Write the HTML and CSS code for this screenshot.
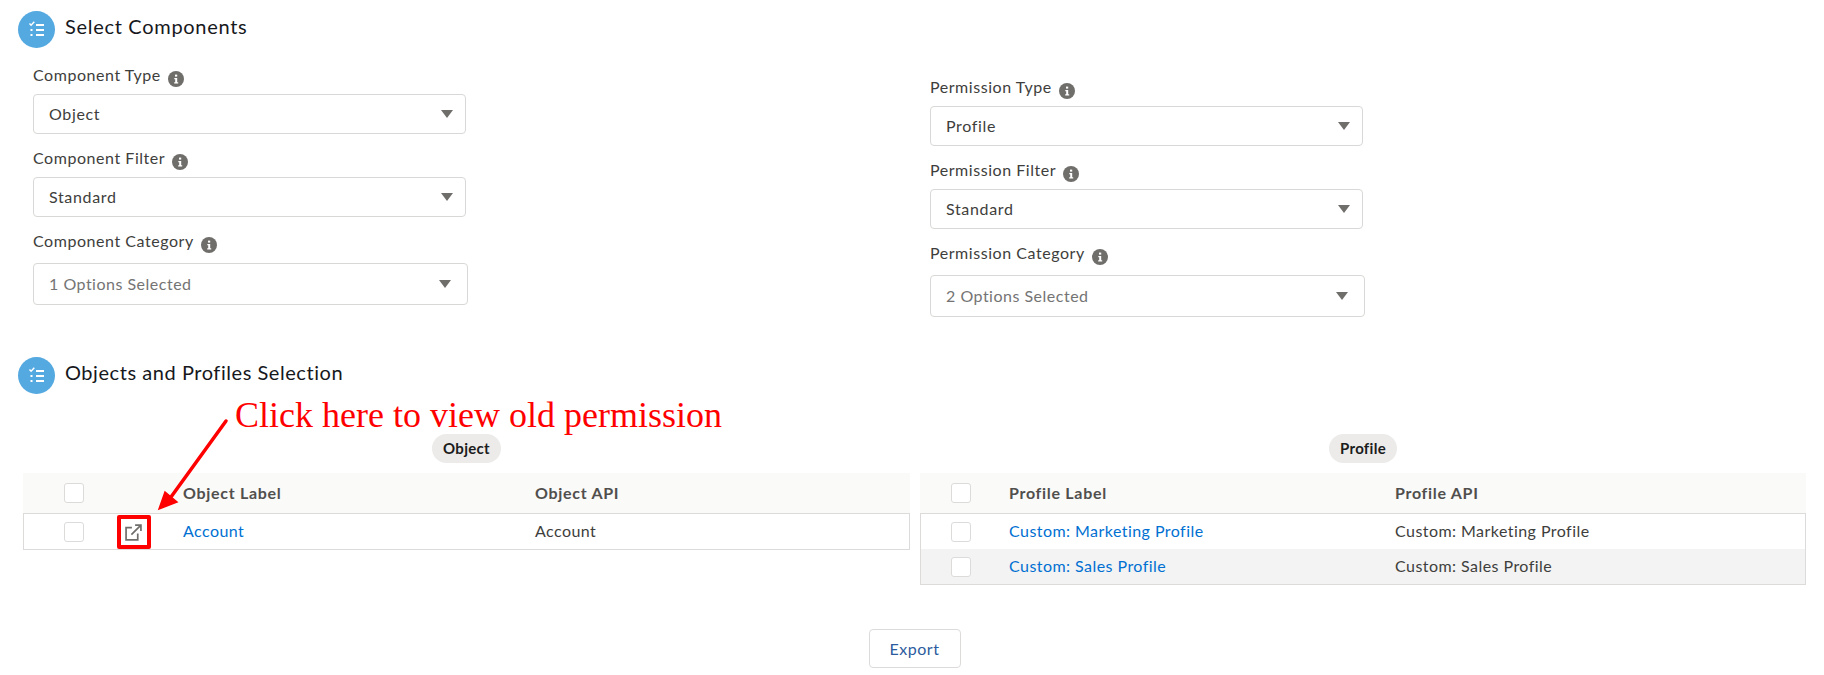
FILE: index.html
```html
<!DOCTYPE html>
<html lang="en">
<head>
<meta charset="utf-8">
<title>Select Components</title>
<link rel="stylesheet" href="styles.css">
</head>
<body>
<svg class="defs" width="0" height="0" aria-hidden="true">
  <symbol id="ic-list" viewBox="0 0 37 37">
    <path d="M11.500 12.500l1.600 1.800 3.200-3.600" fill="none" stroke="#fff" stroke-width="1.400"/>
    <rect x="18" y="13" width="8" height="2" fill="#fff"/>
    <rect x="18" y="18" width="8" height="2" fill="#fff"/>
    <rect x="18" y="23" width="8" height="2" fill="#fff"/>
    <rect x="12.500" y="18" width="2" height="2" fill="#fff"/>
    <rect x="12.500" y="23" width="2" height="2" fill="#fff"/>
  </symbol>
  <symbol id="ic-info" viewBox="0 0 16 16">
    <circle cx="8" cy="8" r="8" fill="#706e6b"/>
    <rect x="7" y="3.600" width="2.200" height="2" fill="#fff"/>
    <path d="M6.300 7h2.900v4.200h1v1.200H6.200v-1.200h1V8.200h-.9z" fill="#fff"/>
  </symbol>
</svg>

<header class="section-head">
  <span class="badge"><svg class="badge-ic"><use href="#ic-list"/></svg></span>
  <h2 class="title">Select Components</h2>
</header>

<section class="form">
  <div class="col">
    <div class="field">
      <div class="label">Component Type <svg class="info"><use href="#ic-info"/></svg></div>
      <div class="select"><span>Object</span><i class="caret"></i></div>
    </div>
    <div class="field">
      <div class="label">Component Filter <svg class="info"><use href="#ic-info"/></svg></div>
      <div class="select"><span>Standard</span><i class="caret"></i></div>
    </div>
    <div class="field">
      <div class="label label-multi">Component Category <svg class="info"><use href="#ic-info"/></svg></div>
      <div class="select multi"><span>1 Options Selected</span><i class="caret"></i></div>
    </div>
  </div>
  <div class="col col-right">
    <div class="field">
      <div class="label">Permission Type <svg class="info"><use href="#ic-info"/></svg></div>
      <div class="select"><span>Profile</span><i class="caret"></i></div>
    </div>
    <div class="field">
      <div class="label">Permission Filter <svg class="info"><use href="#ic-info"/></svg></div>
      <div class="select"><span>Standard</span><i class="caret"></i></div>
    </div>
    <div class="field">
      <div class="label label-multi">Permission Category <svg class="info"><use href="#ic-info"/></svg></div>
      <div class="select multi"><span>2 Options Selected</span><i class="caret"></i></div>
    </div>
  </div>
</section>

<div class="second">
  <header class="section-head">
    <span class="badge"><svg class="badge-ic"><use href="#ic-list"/></svg></span>
    <h2 class="title">Objects and Profiles Selection</h2>
  </header>

  <div class="callout">Click here to view old permission</div>
  <svg class="arrow" viewBox="0 0 75 95" aria-hidden="true">
    <path d="M71 4L16 80" fill="none" stroke="#f00" stroke-width="3.500" stroke-linecap="round"/>
    <path d="M4 92L10 75 22 85z" fill="#f00" stroke="#f00" stroke-width="1.500"/>
  </svg>

  <div class="tables">
    <div class="panel">
      <div class="pill-wrap"><span class="pill">Object</span></div>
      <div class="grid-row head obj">
        <span class="check"></span><span></span><span class="cell">Object Label</span><span class="cell">Object API</span>
      </div>
      <div class="grid-row body obj row-obj">
        <span class="check"></span>
        <span class="open-cell">
          <svg class="open-ic" viewBox="0 0 16 16"><path d="M6.500 3.500H1v11.500h11V9M6 10L15 1M9.500 1H15v5.500" fill="none" stroke="#706e6b" stroke-width="1.600"/></svg>
          <i class="red-box"></i>
        </span>
        <a class="cell link">Account</a><span class="cell">Account</span>
      </div>
    </div>
    <div class="panel">
      <div class="pill-wrap"><span class="pill">Profile</span></div>
      <div class="grid-row head pro">
        <span class="check"></span><span class="cell">Profile Label</span><span class="cell">Profile API</span>
      </div>
      <div class="pro-body">
        <div class="grid-row body pro">
          <span class="check"></span><a class="cell link">Custom: Marketing Profile</a><span class="cell">Custom: Marketing Profile</span>
        </div>
        <div class="grid-row body pro alt">
          <span class="check"></span><a class="cell link">Custom: Sales Profile</a><span class="cell">Custom: Sales Profile</span>
        </div>
      </div>
    </div>
  </div>

  <div class="actions"><button class="btn" type="button">Export</button></div>
</div>
</body>
</html>
```
FILE: styles.css
```css
* { box-sizing: border-box; }
html, body { margin: 0; padding: 0; background: #fff; }
body {
  width: 1824px;
  height: 675px;
  overflow: hidden;
  font-family: Lato, "Open Sans", sans-serif;
  font-size: 16px;
  color: #3e3e3c;
}
.defs { position: absolute; }

.section-head {
  display: flex;
  align-items: flex-start;
  gap: 10px;
  height: 37px;
  padding-left: 18px;
}
body > .section-head { margin-top: 11px; }
.badge {
  display: block;
  width: 37px;
  height: 37px;
  border-radius: 50%;
  background: #54a9e0;
}
.badge-ic { display: block; width: 37px; height: 37px; }
.title {
  margin: 0;
  font-size: 20px;
  font-weight: 400;
  line-height: 31px;
  color: #16181c;
  letter-spacing: 0.7px;
}
.second .title { letter-spacing: 0.55px; }

.form {
  display: flex;
  padding: 16px 0 0 33px;
  height: 309px;
}
.col { width: 435px; }
.col-right { margin-left: 462px; padding-top: 12px; }
.field { margin-bottom: 13px; }
.label {
  display: flex;
  align-items: flex-start;
  gap: 7px;
  height: 22px;
  margin-bottom: 8px;
  line-height: 22px;
  white-space: nowrap;
  color: #3e3e3c;
  letter-spacing: 0.55px;
}
.label-multi { margin-bottom: 11px; }
.info { width: 16px; height: 16px; margin-top: 7px; flex: none; }
.select {
  display: flex;
  align-items: center;
  justify-content: space-between;
  width: 433px;
  height: 40px;
  padding: 0 12px 0 15px;
  border: 1px solid #d8d8d6;
  border-radius: 4px;
  background: #fff;
  letter-spacing: 0.65px;
  line-height: 36px;
}
.select.multi { width: 435px; height: 42px; color: #747474; padding-right: 16px; letter-spacing: 0.5px; }
.caret {
  width: 0;
  height: 0;
  border-left: 6.500px solid transparent;
  border-right: 6.500px solid transparent;
  border-top: 8px solid #706e6b;
}

.second { position: relative; }
.callout {
  position: absolute;
  left: 235px;
  top: 36px;
  font-family: "Liberation Serif", serif;
  font-size: 36px;
  line-height: 44px;
  color: #f00;
  white-space: nowrap;
}
.arrow {
  position: absolute;
  left: 155px;
  top: 60px;
  width: 75px;
  height: 95px;
  z-index: 2;
}

.tables {
  display: flex;
  align-items: flex-start;
  gap: 10px;
  padding-left: 23px;
  margin-top: 40px;
}
.panel { width: 887px; }
.panel + .panel { width: 886px; }
.pill-wrap { display: flex; justify-content: center; margin-bottom: 10px; }
.pill {
  display: block;
  height: 29px;
  padding: 0 11px;
  border-radius: 15px;
  background: #ecebea;
  color: #1c1c1c;
  font-size: 15px;
  font-weight: 700;
  line-height: 29px;
  letter-spacing: 0.3px;
}

.grid-row { display: grid; align-items: center; letter-spacing: 0.45px; }
.obj { grid-template-columns: 20px 99px 352px 1fr; padding-left: 41px; }
.pro { grid-template-columns: 58px 386px 1fr; padding-left: 31px; }
.head {
  height: 40px;
  background: #fafaf9;
  color: #514f4d;
  font-weight: 700;
  letter-spacing: 0.7px;
}
.body { height: 35px; color: #3e3e3c; }
.cell { padding-bottom: 2px; }
.row-obj {
  height: 37px;
  padding-left: 40px;
  border: 1px solid #dddbda;
}
.pro-body {
  border: 1px solid #dddbda;
}
.pro-body .pro { padding-left: 30px; }
.alt { background: #f3f3f3; }
.check {
  display: block;
  width: 20px;
  height: 20px;
  border: 1px solid #dddbda;
  border-radius: 3px;
  background: #fff;
}
.link { color: #0070d2; }
.open-cell { position: relative; display: block; height: 16px; }
.open-ic { position: absolute; left: 41px; top: 0; width: 17px; height: 17px; }
.red-box {
  position: absolute;
  left: 33px;
  top: -9px;
  width: 34px;
  height: 34px;
  border: 4px solid #f00;
  border-radius: 2px;
}

.actions { display: flex; justify-content: center; padding-left: 5px; margin-top: 44px; }
.btn {
  width: 92px;
  height: 39px;
  padding: 0;
  border: 1px solid #dddbda;
  border-radius: 4px;
  background: #fff;
  color: #2c5c9e;
  font-family: inherit;
  font-size: 16px;
  letter-spacing: 0.5px;
}
```
